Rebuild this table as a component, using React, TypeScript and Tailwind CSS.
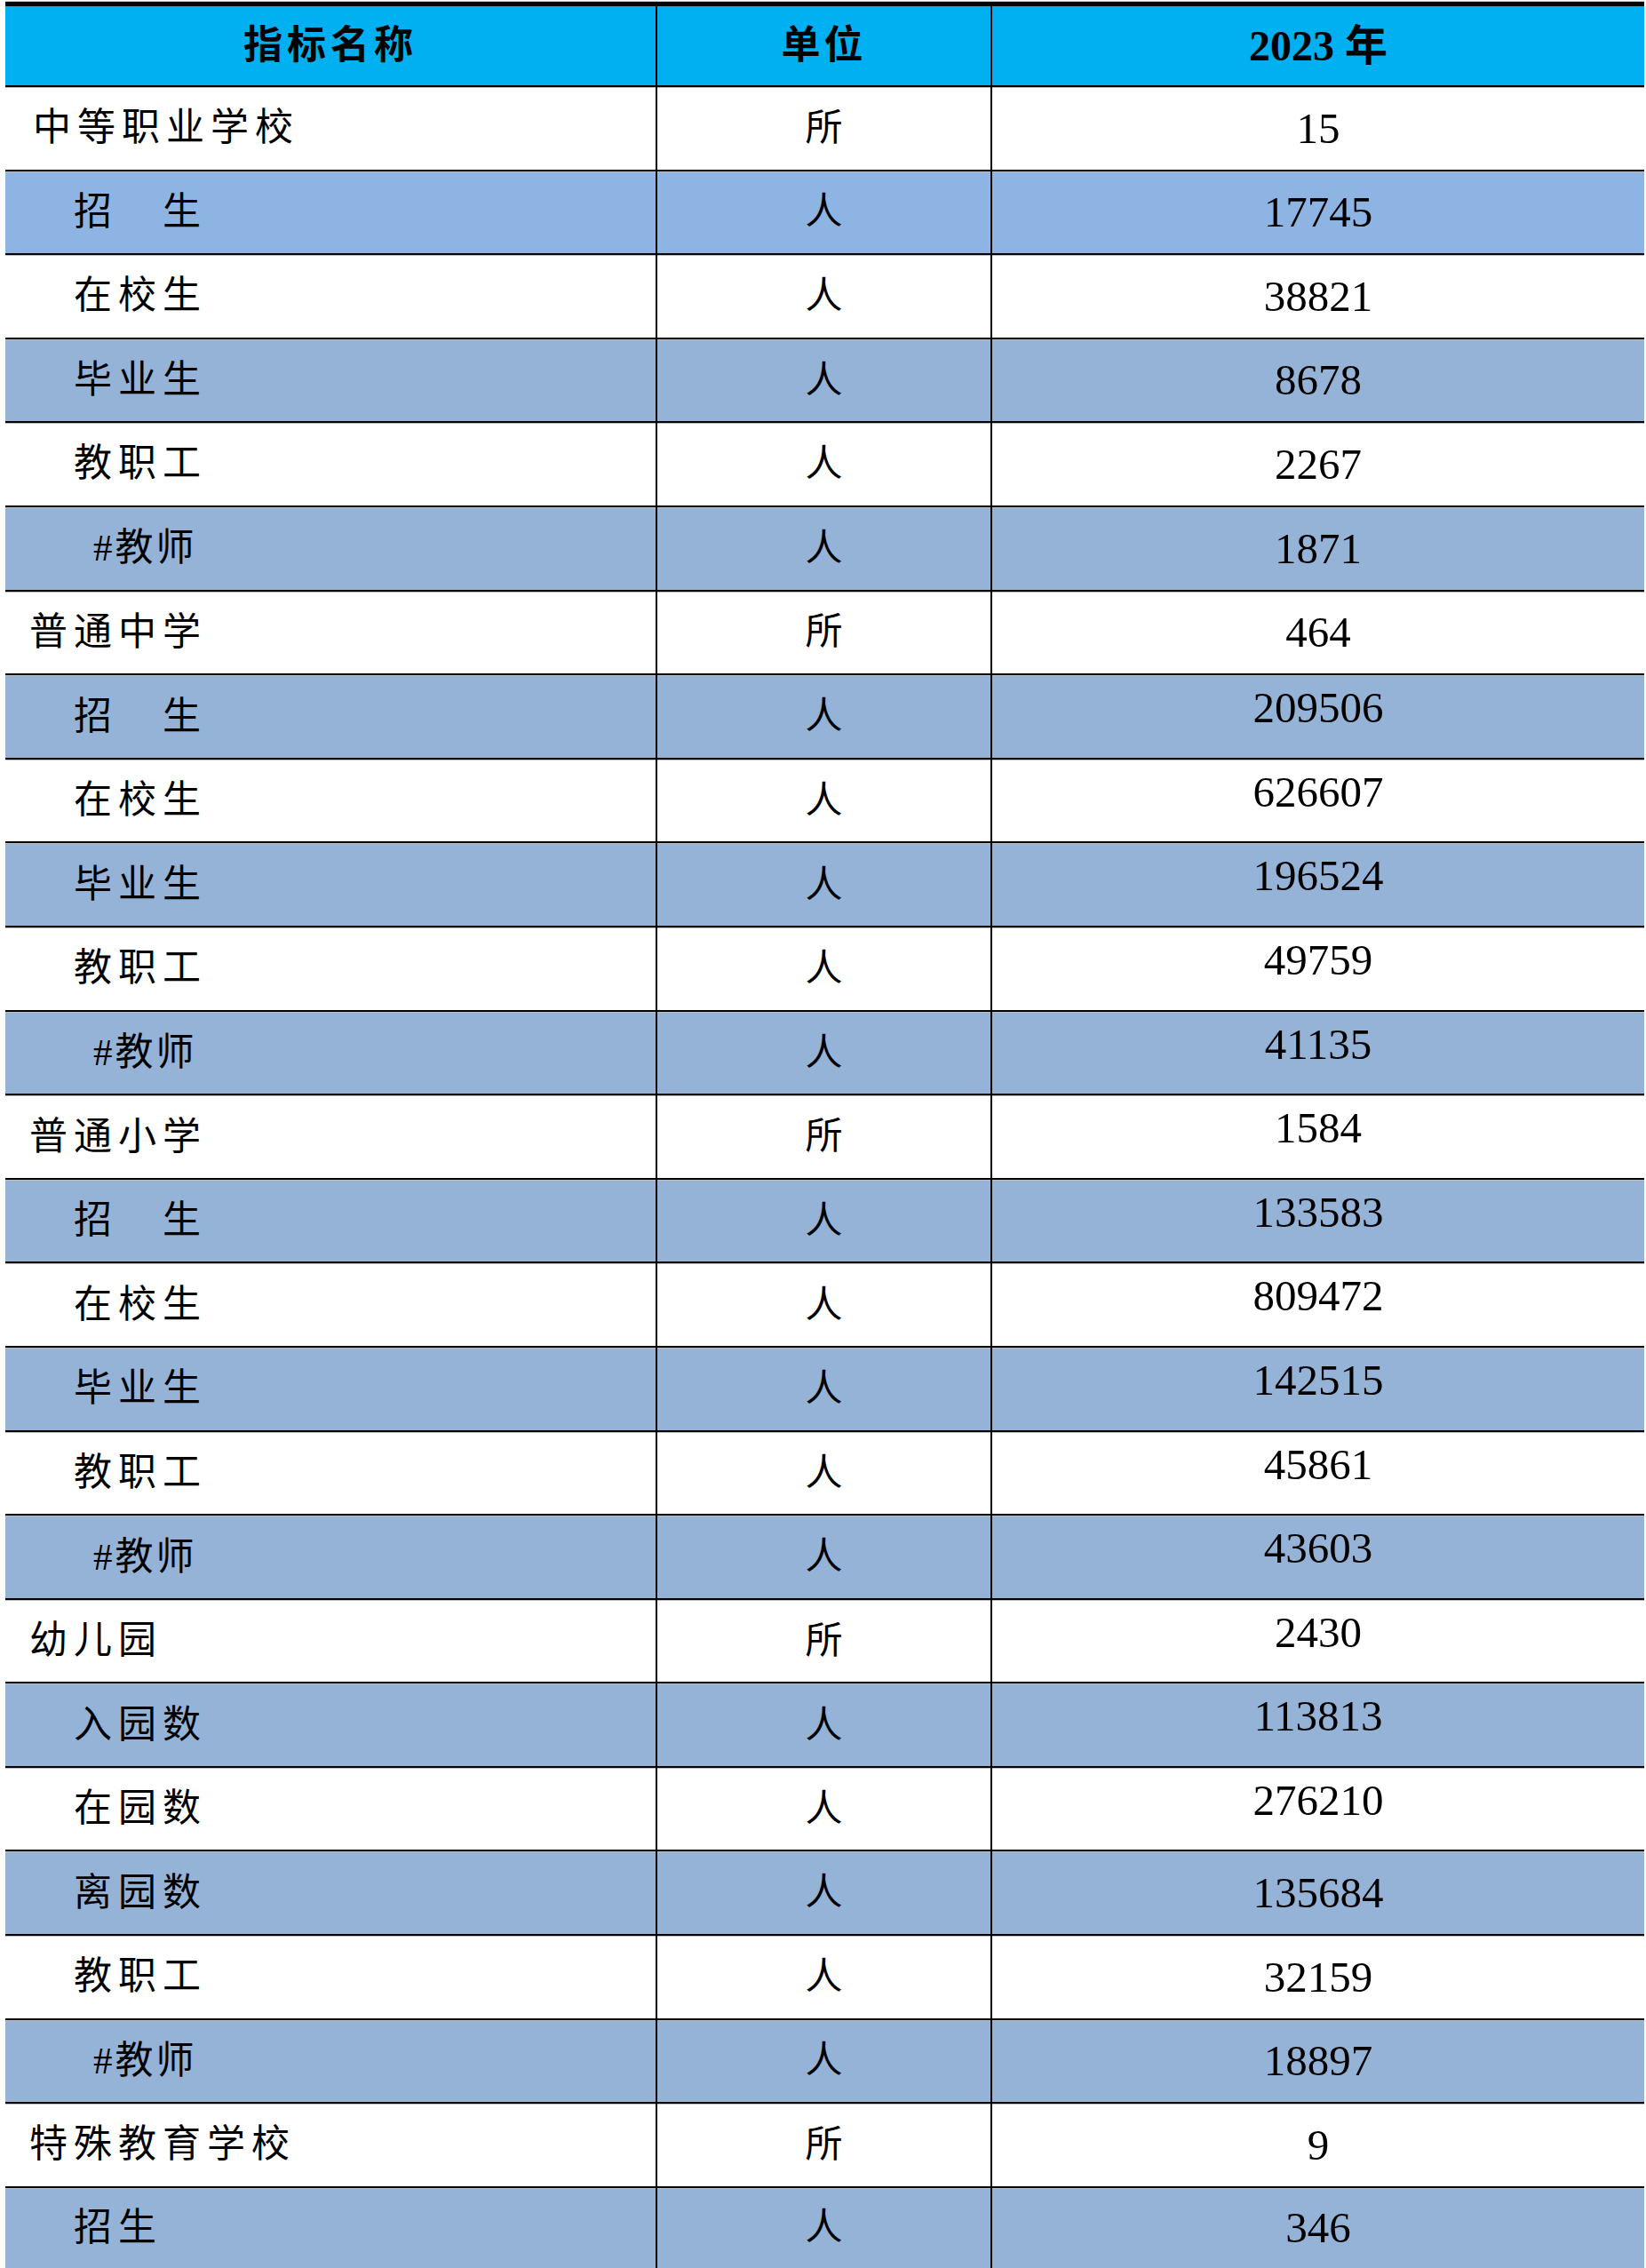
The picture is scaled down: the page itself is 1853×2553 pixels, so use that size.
import React from "react";

type Row = {
  name: string;
  level: "section" | "sub" | "hash";
  unit: string;
  value: string;
  lift?: boolean;
};

const rows: Row[] = [
  { name: "中等职业学校", level: "section", unit: "所", value: "15" },
  { name: "招　生", level: "sub", unit: "人", value: "17745" },
  { name: "在校生", level: "sub", unit: "人", value: "38821" },
  { name: "毕业生", level: "sub", unit: "人", value: "8678" },
  { name: "教职工", level: "sub", unit: "人", value: "2267" },
  { name: "#教师", level: "hash", unit: "人", value: "1871" },
  { name: "普通中学", level: "section", unit: "所", value: "464" },
  { name: "招　生", level: "sub", unit: "人", value: "209506", lift: true },
  { name: "在校生", level: "sub", unit: "人", value: "626607", lift: true },
  { name: "毕业生", level: "sub", unit: "人", value: "196524", lift: true },
  { name: "教职工", level: "sub", unit: "人", value: "49759", lift: true },
  { name: "#教师", level: "hash", unit: "人", value: "41135", lift: true },
  { name: "普通小学", level: "section", unit: "所", value: "1584", lift: true },
  { name: "招　生", level: "sub", unit: "人", value: "133583", lift: true },
  { name: "在校生", level: "sub", unit: "人", value: "809472", lift: true },
  { name: "毕业生", level: "sub", unit: "人", value: "142515", lift: true },
  { name: "教职工", level: "sub", unit: "人", value: "45861", lift: true },
  { name: "#教师", level: "hash", unit: "人", value: "43603", lift: true },
  { name: "幼儿园", level: "section", unit: "所", value: "2430", lift: true },
  { name: "入园数", level: "sub", unit: "人", value: "113813", lift: true },
  { name: "在园数", level: "sub", unit: "人", value: "276210", lift: true },
  { name: "离园数", level: "sub", unit: "人", value: "135684" },
  { name: "教职工", level: "sub", unit: "人", value: "32159" },
  { name: "#教师", level: "hash", unit: "人", value: "18897" },
  { name: "特殊教育学校", level: "section", unit: "所", value: "9" },
  { name: "招生", level: "sub", unit: "人", value: "346" },
];

const font = "font-['Liberation_Serif','Noto_Sans_CJK_SC',serif]";

export default function App() {
  return (
    <div className={`min-h-screen bg-white pl-[6px] pt-[2px] text-black ${font}`}>
      <div className="w-[1845px]">
        {/* header */}
        <div className="grid h-[94px] grid-cols-[732px_377px_736px] border-t-[5px] border-black bg-[#00B0F0] font-bold shadow-[0_-1px_0_#c8c8c8]">
          <div className="flex items-center justify-center text-[44px] tracking-[5px]">指标名称</div>
          <div className="flex items-center justify-center border-l-2 border-black text-[44px] tracking-[4px]">单位</div>
          <div className="flex items-center justify-center border-l-2 border-black text-[48px]">
            2023 年
          </div>
        </div>

        {rows.map((r, i) => {
          const last = i === rows.length - 1;
          const bg = i % 2 === 0 ? "bg-white" : i === 1 ? "bg-[#8DB4E2]" : "bg-[#95B3D7]";
          const pad =
            r.level === "section"
              ? i === 0
                ? "pl-[31px]"
                : "pl-[27px]"
              : r.level === "sub"
              ? "pl-[77px]"
              : "pl-[99px]";
          return (
            <div
              key={i}
              className={`grid grid-cols-[732px_377px_736px] border-t-2 border-black shadow-[inset_0_1px_0_#bdbdbd] ${bg} ${
                last ? "h-[92px]" : "h-[94.6px]"
              }`}
            >
              <div className={`flex items-center text-[43px] ${r.level === "hash" ? "tracking-[3px]" : "tracking-[7px]"} ${pad}`}>
                {r.name}
              </div>
              <div className="flex items-center justify-center border-l-2 border-black text-[42px]">{r.unit}</div>
              <div
                className={`flex items-center justify-center border-l-2 border-black text-[49px] ${
                  r.lift ? "pb-[20px]" : ""
                }`}
              >
                {r.value}
              </div>
            </div>
          );
        })}
      </div>
    </div>
  );
}
